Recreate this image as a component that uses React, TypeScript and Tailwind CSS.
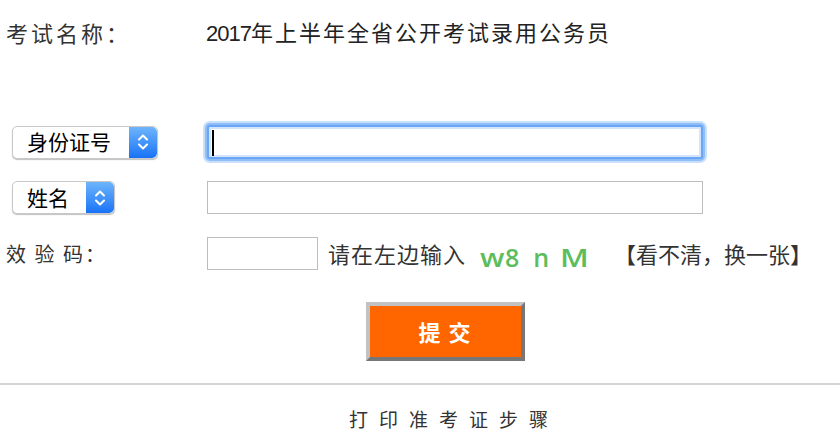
import React from "react";

const CJK = "font-['Noto_Sans_CJK_SC',sans-serif]";

function Chevrons() {
  return (
    <svg width="12" height="22" viewBox="0 0 12 22" fill="none">
      <path d="M2 8.5 L6 4.5 L10 8.5" stroke="white" strokeWidth="2" strokeLinecap="round" strokeLinejoin="round" />
      <path d="M2 13.5 L6 17.5 L10 13.5" stroke="white" strokeWidth="2" strokeLinecap="round" strokeLinejoin="round" />
    </svg>
  );
}

// Mac-style native select look
function FakeSelect({ label, width }: { label: string; width: string }) {
  return (
    <div
      className={`flex h-[33px] items-stretch rounded-[5px] border border-[#c9c9c9] bg-white shadow-[0_1px_1px_rgba(0,0,0,0.25)] ${width}`}
    >
      <span className="flex flex-1 items-center pl-[14px] text-[21px] text-black">{label}</span>
      <span className="flex w-[28px] items-center justify-center rounded-r-[5px] bg-gradient-to-b from-[#6cb4fb] to-[#1672f6]">
        <Chevrons />
      </span>
    </div>
  );
}

// the captcha picture is stretched sideways, so w and M are drawn wider
function Captcha() {
  return (
    <div className="ml-[14px] mt-[8px] flex w-[134px] items-baseline font-['Open_Sans',sans-serif] text-[25px] font-semibold leading-none text-[#5cbd5c]">
      <span className="inline-block w-[25px] origin-left scale-x-[1.2]">w</span>
      <span>8</span>
      <span className="ml-[14px]">n</span>
      <span className="ml-[11px] inline-block w-[28px] origin-left scale-x-[1.25]">M</span>
    </div>
  );
}

export default function App() {
  return (
    <div className={`h-[442px] w-[840px] overflow-hidden bg-white text-[#333] ${CJK}`}>
      {/* exam name */}
      <div className="flex h-[64px] items-center">
        <div className="w-[206px] pl-[6px] text-[22px] tracking-[3px]">考试名称：</div>
        <div className="text-[22px] tracking-[2px] text-[#222]">
          <span className="font-['Liberation_Sans_Narrow','Liberation_Sans',sans-serif] tracking-[-1px]">2017</span>
          年上半年全省公开考试录用公务员
        </div>
      </div>

      {/* id number */}
      <div className="mt-[61px] flex h-[34px] items-center">
        <div className="w-[207px] pl-[12px]">
          <FakeSelect label="身份证号" width="w-[146px]" />
        </div>
        <div className="relative h-[34px] w-[496px] rounded-[3px] border-2 border-[#6aa6f3] bg-white shadow-[0_0_0_2px_#8fbdf7,0_0_0_4px_#c9e0fc,inset_0_0_0_2px_#d3e5fc]">
          <span className="absolute left-[3px] top-[3px] h-[26px] w-[2px] bg-black" />
        </div>
      </div>

      {/* name */}
      <div className="mt-[22px] flex h-[33px] items-center">
        <div className="w-[207px] pl-[12px]">
          <FakeSelect label="姓名" width="w-[103px]" />
        </div>
        <div className="h-[33px] w-[496px] border border-[#bdbdbd] bg-white" />
      </div>

      {/* captcha */}
      <div className="mt-[23px] flex h-[33px] items-center">
        <div className="w-[207px] whitespace-pre pl-[6px] text-[20px] tracking-[2px]">效 验 码：</div>
        <div className="h-[33px] w-[111px] border border-[#bdbdbd] bg-white" />
        <div className="ml-[10px] text-[22px] tracking-[1px]">请在左边输入</div>
        <Captcha />
        <div className="text-[22px]">【看不清，换一张】</div>
      </div>

      {/* submit */}
      <div className="mt-[32px] flex h-[59px] pl-[366px]">
        <button className="flex h-[59px] w-[159px] items-center justify-center border-[4px] border-t-[#c2c2c2] border-l-[#c2c2c2] border-b-[#777] border-r-[#777] bg-[#ff6600] pl-[6px] text-[22px] font-bold tracking-[8px] text-white">
          提交
        </button>
      </div>

      <div className="mt-[22px] h-[2px] bg-[#d4d4d4]" />

      <div className="pl-[349px] pt-[20px] text-[19px] tracking-[11px]">打印准考证步骤</div>
    </div>
  );
}
